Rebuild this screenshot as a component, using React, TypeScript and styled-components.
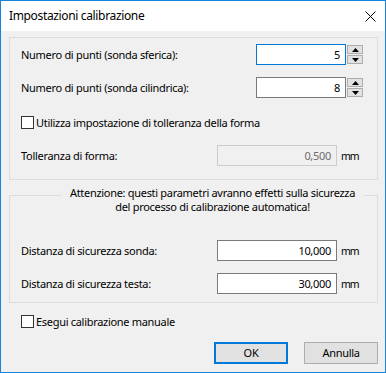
import React from "react";
import styled, { createGlobalStyle } from "styled-components";

const Global = createGlobalStyle`
  html, body { margin: 0; padding: 0; background: #ffffff; }
  body {
    font-family: "Noto Sans", "Open Sans", sans-serif;
    font-size: 11px;
    letter-spacing: -0.3px;
    line-height: 14px;
    color: #000000;
  }
  * { box-sizing: border-box; }
`;

const Window = styled.div`
  width: 386px;
  height: 373px;
  border: 1px solid #1883d7;
  display: flex;
  flex-direction: column;
  background: #f0f0f0;
  overflow: hidden;
`;

const TitleBar = styled.div`
  height: 30px;
  flex: none;
  background: #ffffff;
  display: flex;
  align-items: center;
  justify-content: space-between;
  padding: 0 9px 0 8px;
  font-size: 12px;
  letter-spacing: -0.35px;
`;

const Body = styled.div`
  flex: 1;
  padding: 6px 7px 0 8px;
  display: flex;
  flex-direction: column;
`;

const Group = styled.div<{ $mt?: number; $pt?: number; $pb?: number }>`
  border: 1px solid #dcdcdc;
  margin-top: ${(p) => p.$mt ?? 0}px;
  padding: ${(p) => p.$pt ?? 0}px 14px ${(p) => p.$pb ?? 0}px 11px;
  display: flex;
  flex-direction: column;
`;

const Caption = styled.div`
  margin: -10px 0 0 40px;
  width: 303px;
  background: #f0f0f0;
  line-height: 14px;
  text-align: center;
  white-space: nowrap;
`;

const Row = styled.div<{ $mt?: number }>`
  display: flex;
  align-items: center;
  height: 21px;
  margin-top: ${(p) => p.$mt ?? 0}px;
`;

const Label = styled.span`
  flex: 1;
  white-space: nowrap;
`;

const TextBox = styled.div<{ $w: number; $state?: "focus" | "disabled" | "normal" }>`
  width: ${(p) => p.$w}px;
  height: 21px;
  border: 1px solid
    ${(p) =>
      p.$state === "focus" ? "#0078d7" : p.$state === "disabled" ? "#cccccc" : "#7a7a7a"};
  background: ${(p) => (p.$state === "disabled" ? "#f0f0f0" : "#ffffff")};
  color: ${(p) => (p.$state === "disabled" ? "#6d6d6d" : "#000000")};
  display: flex;
  align-items: center;
  justify-content: flex-end;
  padding-right: 5px;
`;

const Spinner = styled.div`
  margin-left: 1px;
  width: 16px;
  display: flex;
  flex-direction: column;
  gap: 1px;
`;

const SpinButton = styled.div`
  height: 9px;
  border: 1px solid #adadad;
  background: #e1e1e1;
  display: flex;
  align-items: center;
  justify-content: center;
`;

const Unit = styled.span`
  margin-left: 4px;
  width: 22px;
  font-size: 10.5px;
  letter-spacing: -1.1px;
`;

const CheckBox = styled.span`
  width: 13px;
  height: 13px;
  border: 1px solid #333333;
  background: #ffffff;
  margin-right: 2px;
  flex: none;
`;

const CheckRow = styled(Row)`
  padding-left: 12px;
`;

const ButtonRow = styled.div`
  display: flex;
  justify-content: flex-end;
  gap: 16px;
  margin-top: 10px;
`;

const Button = styled.div<{ $default?: boolean }>`
  width: 74px;
  height: 22px;
  background: #e1e1e1;
  border: ${(p) => (p.$default ? "2px solid #0078d7" : "1px solid #adadad")};
  display: flex;
  align-items: center;
  justify-content: center;
`;

const Arrow = ({ up }: { up?: boolean }) => (
  <svg width="7" height="4" viewBox="0 0 7 4">
    <polygon points={up ? "0,4 7,4 3.5,0" : "0,0 7,0 3.5,4"} fill="#000" />
  </svg>
);

const Spin = () => (
  <Spinner>
    <SpinButton>
      <Arrow up />
    </SpinButton>
    <SpinButton>
      <Arrow />
    </SpinButton>
  </Spinner>
);

export default function App() {
  return (
    <>
      <Global />
      <Window>
        <TitleBar>
          <span>Impostazioni calibrazione</span>
          <svg width="11" height="11" viewBox="0 0 11 11">
            <path d="M0.5 0.5 L10.5 10.5 M10.5 0.5 L0.5 10.5" stroke="#000" strokeWidth="1" />
          </svg>
        </TitleBar>
        <Body>
          <Group $pt={6} $pb={13}>
            <Row>
              <Label>Numero di punti (sonda sferica):</Label>
              <TextBox $w={90} $state="focus">5</TextBox>
              <Spin />
            </Row>
            <Row $mt={12}>
              <Label>Numero di punti (sonda cilindrica):</Label>
              <TextBox $w={90}>8</TextBox>
              <Spin />
            </Row>
            <Row $mt={14}>
              <CheckBox />
              <Label>Utilizza impostazione di tolleranza della forma</Label>
            </Row>
            <Row $mt={12}>
              <Label>Tolleranza di forma:</Label>
              <TextBox $w={120} $state="disabled">0,500</TextBox>
              <Unit>mm</Unit>
            </Row>
          </Group>
          <Group $mt={15} $pb={8}>
            <Caption>
              Attenzione: questi parametri avranno effetti sulla sicurezza
              <br />
              del processo di calibrazione automatica!
            </Caption>
            <Row $mt={26}>
              <Label>Distanza di sicurezza sonda:</Label>
              <TextBox $w={120}>10,000</TextBox>
              <Unit>mm</Unit>
            </Row>
            <Row $mt={12}>
              <Label>Distanza di sicurezza testa:</Label>
              <TextBox $w={120}>30,000</TextBox>
              <Unit>mm</Unit>
            </Row>
          </Group>
          <CheckRow $mt={8}>
            <CheckBox />
            <Label>Esegui calibrazione manuale</Label>
          </CheckRow>
          <ButtonRow>
            <Button $default>OK</Button>
            <Button>Annulla</Button>
          </ButtonRow>
        </Body>
      </Window>
    </>
  );
}
